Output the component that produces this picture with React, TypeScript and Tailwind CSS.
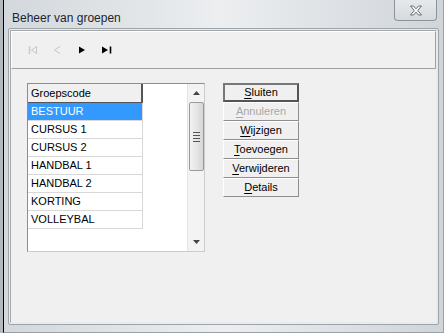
const rows = ["BESTUUR", "CURSUS 1", "CURSUS 2", "HANDBAL 1", "HANDBAL 2", "KORTING", "VOLLEYBAL"];

const buttons = [
  { key: "S", rest: "luiten", def: true },
  { key: "A", rest: "nnuleren", disabled: true },
  { key: "W", rest: "ijzigen" },
  { key: "T", rest: "oevoegen" },
  { key: "V", rest: "erwijderen" },
  { key: "D", rest: "etails" },
];

const NavIcon = ({ kind }: { kind: "first" | "prev" | "next" | "last" }) => {
  if (kind === "first")
    return (
      <svg width="10" height="10" viewBox="0 0 10 10">
        <path d="M1.5 1v8" stroke="#c8c8c8" strokeWidth="1.4" />
        <path d="M8.5 1.5 L3.5 5 L8.5 8.5 Z" fill="none" stroke="#c8c8c8" strokeWidth="1" />
      </svg>
    );
  if (kind === "prev")
    return (
      <svg width="10" height="10" viewBox="0 0 10 10">
        <path d="M8 1.5 L2.5 5 L8 8.5" fill="none" stroke="#c8c8c8" strokeWidth="1" />
      </svg>
    );
  if (kind === "next")
    return (
      <svg width="8" height="10" viewBox="0 0 8 10">
        <path d="M1 1.5 L7 5 L1 8.5 Z" fill="#000" />
      </svg>
    );
  return (
    <svg width="12" height="10" viewBox="0 0 12 10">
      <path d="M1 1.5 L7 5 L1 8.5 Z" fill="#000" />
      <path d="M9.5 1.5v7" stroke="#000" strokeWidth="1.6" />
    </svg>
  );
};

export default function App() {
  return (
    <div
      className="w-[444px] h-[333px] bg-[#b4b9be] pl-[3px] overflow-hidden"
      style={{ fontFamily: '"Liberation Sans", Arial, sans-serif' }}
    >
      <div className="h-full border-l border-black border-r border-r-[#9aa0a5] border-b border-b-[#9aa0a5] bg-gradient-to-r from-[#d3d8dc] via-[#eceef0] to-[#d0d5da] flex flex-col pl-[4px] pr-[4px] pb-[7px]">
        {/* title bar */}
        <div className="h-[28px] flex items-start justify-between">
          <div className="pt-[9px] pl-[4px] text-[12px] text-[#1b2533]">Beheer van groepen</div>
          <div className="mr-[2px] w-[43px] h-[21px] border border-t-0 border-[#8e9399] rounded-b-[4px] bg-gradient-to-b from-[#e6e9ec] to-[#d5dade] flex items-center justify-center">
            <svg width="14" height="11" viewBox="0 0 14 11">
              <path
                d="M1.5 1 H4.5 L7 3.8 L9.5 1 H12.5 L8.8 5.5 L12.5 10 H9.5 L7 7.2 L4.5 10 H1.5 L5.2 5.5 Z"
                fill="#f4f5f6"
                stroke="#6c7177"
                strokeWidth="1"
              />
            </svg>
          </div>
        </div>

        {/* client frame */}
        <div className="flex-1 flex flex-col border border-[#9ea3a8] rounded-[2px] p-px bg-[#e9ecee]">
          <div className="flex-1 border border-[#a3a8ad] border-b-[#e8ebee] border-r-[#e8ebee] bg-[#f0f0f0] flex flex-col">
            {/* toolbar */}
            <div className="h-[38px] border border-white border-b-[#a0a0a0] border-r-[#a0a0a0] flex items-center gap-[14px] pl-[16px] pb-[1px]">
              <NavIcon kind="first" />
              <NavIcon kind="prev" />
              <span className="ml-[2px]">
                <NavIcon kind="next" />
              </span>
              <span className="ml-[1px]">
                <NavIcon kind="last" />
              </span>
            </div>

            <div className="flex items-start pl-[16px] pt-[14px] gap-[18px]">
              {/* list box */}
              <div className="w-[178px] h-[169px] border border-[#8a8e93] border-b-[#c9ccd0] border-r-[#c9ccd0] bg-white flex">
                <div className="flex-1 flex flex-col">
                  <div className="w-[115px] h-[19px] bg-[#f0f0f0] border-b border-r-2 border-[#555] flex items-center pl-[3px] text-[11px] text-black">
                    Groepscode
                  </div>
                  {rows.map((r, i) => (
                    <div
                      key={r}
                      className={
                        "w-[115px] h-[18px] flex items-center pl-[3px] text-[11px] border-b border-r border-[#d8d8d8] " +
                        (i === 0 ? "bg-[#3399ff] text-white" : "bg-white text-black")
                      }
                    >
                      {r}
                    </div>
                  ))}
                </div>
                {/* scrollbar */}
                <div className="w-[17px] bg-[#f3f3f3] border-l border-[#e3e3e3] flex flex-col items-center">
                  <div className="h-[18px] flex items-center justify-center">
                    <svg width="7" height="4" viewBox="0 0 7 4">
                      <path d="M0 4 L3.5 0 L7 4 Z" fill="#444" />
                    </svg>
                  </div>
                  <div className="w-[15px] h-[69px] border border-[#9a9a9a] rounded-[2px] bg-gradient-to-r from-[#f2f2f2] via-[#e6e6e6] to-[#d6d6d6] flex flex-col items-center justify-center gap-[2px]">
                    <div className="w-[7px] h-px bg-[#555]" />
                    <div className="w-[7px] h-px bg-[#555]" />
                    <div className="w-[7px] h-px bg-[#555]" />
                    <div className="w-[7px] h-px bg-[#555]" />
                  </div>
                  <div className="flex-1" />
                  <div className="h-[18px] flex items-center justify-center">
                    <svg width="7" height="4" viewBox="0 0 7 4">
                      <path d="M0 0 L3.5 4 L7 0 Z" fill="#444" />
                    </svg>
                  </div>
                </div>
              </div>

              {/* buttons */}
              <div className="flex flex-col w-[76px]">
                {buttons.map((b) => (
                  <div
                    key={b.key}
                    className={
                      "h-[19px] flex items-center justify-center text-[11px] bg-[#f0f0f0] " +
                      (b.def
                        ? "border-2 border-[#555] border-t-[#777] border-l-[#777]"
                        : "border border-white border-b-[#8e8e8e] border-r-[#8e8e8e]") +
                      (b.disabled ? " text-[#a8a8a8]" : " text-black")
                    }
                  >
                    <span>
                      <span className="underline underline-offset-[2px]">{b.key}</span>
                      {b.rest}
                    </span>
                  </div>
                ))}
              </div>
            </div>
          </div>
        </div>
      </div>
    </div>
  );
}
